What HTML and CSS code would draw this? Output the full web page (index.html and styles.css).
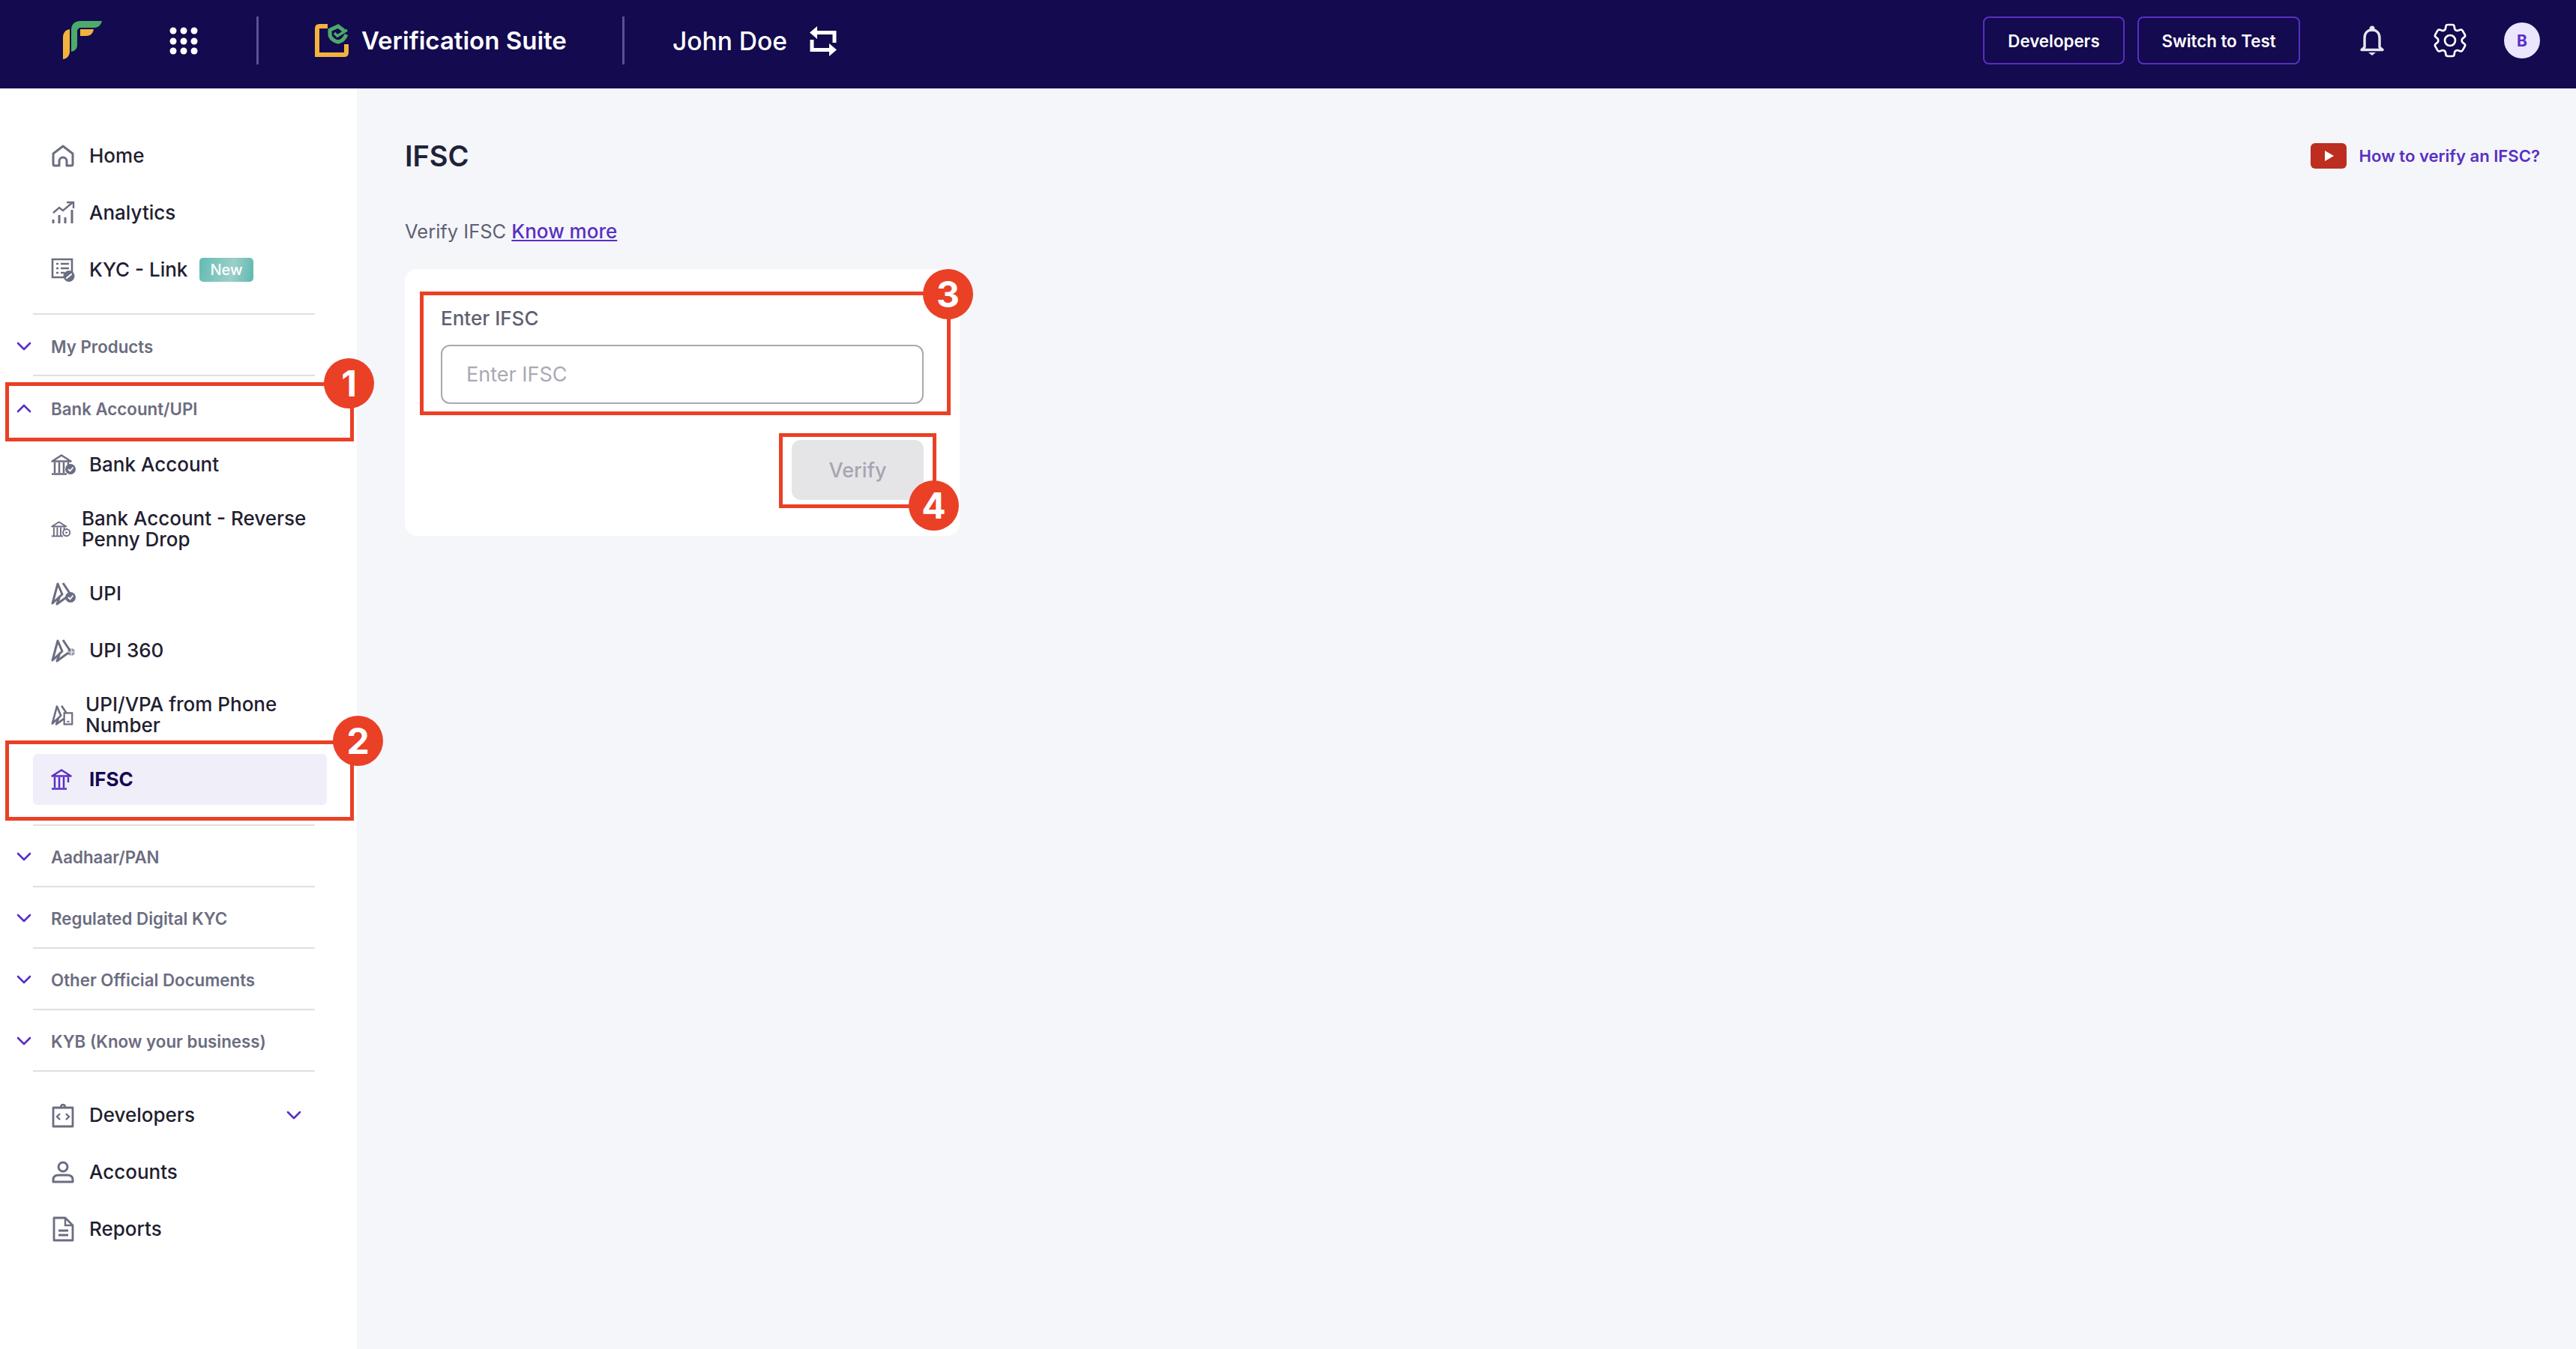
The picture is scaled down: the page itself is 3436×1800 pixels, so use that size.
FILE: index.html
```html
<!DOCTYPE html>
<html lang="en">
  <head>
    <meta charset="UTF-8">
    <title>IFSC - Verification Suite</title>
    <link rel="stylesheet" href="styles.css">
  </head>
  <body>
    <svg class="defs" width="0" height="0">
      <symbol id="bank" viewBox="0 0 34 28">
        <path d="M1.5 9.5 L14 1.5 L26.5 9.5 Z" fill="none" stroke="currentColor" stroke-width="2.5" stroke-linejoin="round"/>
        <path d="M5 11 V25 M11 11 V25 M17 11 V25 M23 11 V18 M1 26.5 H21" fill="none" stroke="currentColor" stroke-width="2.5"/>
      </symbol>
      <symbol id="upi" viewBox="0 0 34 32">
        <path d="M9 3 L2 29 L15 17 Z M16 2 L26 17 L8 30 L12 19" fill="none" stroke="currentColor" stroke-width="3" stroke-linejoin="round"/>
      </symbol>
      <symbol id="chev" viewBox="0 0 20 12">
        <path d="M2 2 L10 10 L18 2" fill="none" stroke="currentColor" stroke-width="2.6" stroke-linecap="round" stroke-linejoin="round"/>
      </symbol>
    </svg>

    <div class="app">
      <header class="topbar">
        <svg class="logo" viewBox="0 0 52 51">
          <path d="M9 11 C3 12 0 16 0 22 V51 C6 50 9 46 9 40 Z" fill="#f2b33d"/>
          <path d="M52 0 H23 C15 0 11 5 11 12 V41 C16 40 19 37 19 32 V14 C19 11 21 9 24 9 H42 C47 9 51 5 52 0 Z" fill="#4caa6a"/>
          <path d="M23 11 H41 C40 17 36 20 31 20 H23 Z" fill="#f2b33d"/>
        </svg>
        <svg class="apps" viewBox="0 0 38 38">
          <circle cx="5" cy="5" r="4.5"/><circle cx="19" cy="5" r="4.5"/><circle cx="33" cy="5" r="4.5"/>
          <circle cx="5" cy="19" r="4.5"/><circle cx="19" cy="19" r="4.5"/><circle cx="33" cy="19" r="4.5"/>
          <circle cx="5" cy="32" r="4.5"/><circle cx="19" cy="32" r="4.5"/><circle cx="33" cy="32" r="4.5"/>
        </svg>
        <span class="bar-line bar-line-a"></span>
        <svg class="suite-icon" viewBox="0 0 46 45">
          <path d="M17 3 H6 Q3 3 3 6 V41 H39 Q42 41 42 38 V27" fill="none" stroke="#f2b33d" stroke-width="6"/>
          <path d="M39 9 L31 3 L20 8 V14 C20 19 26 23 31 24 C36 23 40 19 42 14" fill="none" stroke="#4caa6a" stroke-width="5"/>
          <path d="M26 12 L30 16 L43 8" fill="none" stroke="#4caa6a" stroke-width="3.5"/>
        </svg>
        <span class="suite-name">Verification Suite</span>
        <span class="bar-line bar-line-b"></span>
        <span class="org-name">John Doe</span>
        <svg class="swap" viewBox="0 0 36 40">
          <path d="M9 8.5 H33 V22 M3 18 V31.5 H27" fill="none" stroke="#fff" stroke-width="5"/>
          <path d="M0 8.5 L10 0 V17 Z M36 31.5 L26 23 V40 Z" fill="#fff"/>
        </svg>
        <div class="topbar-right">
          <a class="ghost-btn">Developers</a>
          <a class="ghost-btn">Switch to Test</a>
          <svg class="bell" viewBox="0 0 32 40">
            <path d="M6 29 V17 C6 10 10 6 16 6 C22 6 26 10 26 17 V29 L30 32.5 H2 Z" fill="none" stroke="#e6e6ee" stroke-width="3.4" stroke-linejoin="round"/>
            <circle cx="16" cy="4" r="3.5" fill="#e6e6ee"/>
            <path d="M11 36 H21 L16 40 Z" fill="#e6e6ee"/>
          </svg>
          <svg class="gear" viewBox="0 0 24 24" fill="none" stroke="#fff" stroke-width="1.15">
            <path d="M9.594 3.94c.09-.542.56-.94 1.11-.94h2.593c.55 0 1.02.398 1.11.94l.213 1.281c.063.374.313.686.645.87.074.04.147.083.22.127.325.196.72.257 1.075.124l1.217-.456a1.125 1.125 0 011.37.49l1.296 2.247a1.125 1.125 0 01-.26 1.431l-1.003.827c-.293.24-.438.613-.431.992a6.759 6.759 0 010 .255c-.007.378.138.75.43.99l1.005.828c.424.35.534.954.26 1.43l-1.298 2.247a1.125 1.125 0 01-1.369.491l-1.217-.456c-.355-.133-.75-.072-1.076.124a6.57 6.57 0 01-.22.128c-.331.183-.581.495-.644.869l-.213 1.28c-.09.543-.56.941-1.11.941h-2.594c-.55 0-1.02-.398-1.11-.94l-.213-1.281c-.062-.374-.312-.686-.644-.87a6.52 6.52 0 01-.22-.127c-.325-.196-.72-.257-1.076-.124l-1.217.456a1.125 1.125 0 01-1.369-.49l-1.297-2.247a1.125 1.125 0 01.26-1.431l1.004-.827c.292-.24.437-.613.43-.992a6.932 6.932 0 010-.255c.007-.378-.138-.75-.43-.99l-1.004-.828a1.125 1.125 0 01-.26-1.43l1.297-2.247a1.125 1.125 0 011.37-.491l1.216.456c.356.133.751.072 1.076-.124.072-.044.146-.087.22-.128.332-.183.582-.495.644-.869l.214-1.281z"/>
            <circle cx="12" cy="12" r="3"/>
          </svg>
          <span class="avatar">B</span>
        </div>
      </header>

      <div class="body-row">
        <nav class="sidebar">
          <a class="nav-item">
            <svg class="nav-icon" viewBox="0 0 34 34"><path d="M3 14 L16 4 L29 14 V28 Q29 30 27 30 H21 V24 A5 5 0 0 0 11 24 V30 H5 Q3 30 3 28 Z" fill="none" stroke="currentColor" stroke-width="3" stroke-linejoin="round"/></svg>
            <span>Home</span>
          </a>
          <a class="nav-item">
            <svg class="nav-icon" viewBox="0 0 34 34"><path d="M3 26 V31 M11 20 V31 M19 23 V31 M28 13 V31" fill="none" stroke="currentColor" stroke-width="3"/><path d="M3 17 L11 10 L16 14 L29 3 M21 3 H30 V11" fill="none" stroke="currentColor" stroke-width="2.4"/></svg>
            <span>Analytics</span>
          </a>
          <a class="nav-item">
            <svg class="nav-icon" viewBox="0 0 34 34"><path d="M2 3 H28 V27 H2 Z" fill="none" stroke="currentColor" stroke-width="2.6"/><path d="M7 9 H10 M13 9 H24 M7 15 H10 M13 15 H24 M7 21 H10 M13 21 H18" fill="none" stroke="currentColor" stroke-width="2.4"/><circle cx="24" cy="25.500" r="7.500" fill="currentColor"/><path d="M21 28 L27 23" stroke="#fff" stroke-width="2.200" stroke-linecap="round"/></svg>
            <span>KYC - Link</span>
            <em class="new-tag">New</em>
          </a>

          <div class="section section-first section-products">
            <svg class="section-chev"><use href="#chev"/></svg>
            <span>My Products</span>
          </div>
          <div class="section section-open">
            <svg class="section-chev chev-up"><use href="#chev"/></svg>
            <span>Bank Account/UPI</span>
          </div>

          <a class="nav-item">
            <svg class="nav-icon" viewBox="0 0 34 28"><use href="#bank" width="34" height="28"/><circle cx="26" cy="20" r="7" fill="currentColor"/><path d="M23 20 L25.500 22.500 L29.500 17.500" fill="none" stroke="#fff" stroke-width="1.800"/></svg>
            <span>Bank Account</span>
          </a>
          <a class="nav-item nav-tall">
            <svg class="nav-icon icon-small" viewBox="0 0 34 28"><use href="#bank" width="34" height="28"/><circle cx="27" cy="20" r="6" fill="#fff" stroke="currentColor" stroke-width="2.500"/><path d="M25.500 17.500 L29.500 20 L25.500 22.500 Z" fill="currentColor"/></svg>
            <span class="wrap-label">Bank Account - Reverse<br>Penny Drop</span>
          </a>
          <a class="nav-item">
            <svg class="nav-icon" viewBox="0 0 34 32"><use href="#upi" width="34" height="32"/><circle cx="26" cy="21" r="7" fill="currentColor"/><path d="M23 21 L25.500 23.500 L29.500 18.500" fill="none" stroke="#fff" stroke-width="1.800"/></svg>
            <span>UPI</span>
          </a>
          <a class="nav-item">
            <svg class="nav-icon" viewBox="0 0 34 32"><use href="#upi" width="34" height="32"/><circle cx="27" cy="18" r="5" fill="currentColor" opacity=".7"/><path d="M22 18 H32 M27 13 V23" stroke="#fff" stroke-width="1"/></svg>
            <span>UPI 360</span>
          </a>
          <a class="nav-item nav-tall">
            <svg class="nav-icon icon-mid" viewBox="0 0 34 32"><use href="#upi" width="34" height="32"/><path d="M20 13 H32 V30 H20 Z" fill="#fff" stroke="currentColor" stroke-width="2.500"/><path d="M24 26 H28" stroke="currentColor" stroke-width="2"/></svg>
            <span class="wrap-label">UPI/VPA from Phone<br>Number</span>
          </a>
          <a class="nav-item nav-active">
            <svg class="nav-icon icon-active" viewBox="0 0 34 28"><use href="#bank" width="34" height="28"/></svg>
            <span>IFSC</span>
          </a>

          <div class="section section-first section-gap">
            <svg class="section-chev"><use href="#chev"/></svg>
            <span>Aadhaar/PAN</span>
          </div>
          <div class="section">
            <svg class="section-chev"><use href="#chev"/></svg>
            <span>Regulated Digital KYC</span>
          </div>
          <div class="section">
            <svg class="section-chev"><use href="#chev"/></svg>
            <span>Other Official Documents</span>
          </div>
          <div class="section">
            <svg class="section-chev"><use href="#chev"/></svg>
            <span>KYB (Know your business)</span>
          </div>

          <a class="nav-item nav-after">
            <svg class="nav-icon" viewBox="0 0 34 34"><path d="M3 7 H29 V32 H3 Z" fill="none" stroke="currentColor" stroke-width="2.800" stroke-linejoin="round"/><path d="M13 7 Q13 3 16 3 Q19 3 19 7" fill="none" stroke="currentColor" stroke-width="2.400"/><path d="M12 15 L8 19 L12 23 M20 15 L24 19 L20 23" fill="none" stroke="currentColor" stroke-width="2.400"/></svg>
            <span>Developers</span>
            <svg class="item-chev"><use href="#chev"/></svg>
          </a>
          <a class="nav-item">
            <svg class="nav-icon" viewBox="0 0 34 34"><circle cx="16" cy="10" r="6" fill="none" stroke="currentColor" stroke-width="3"/><path d="M3 30 V27 Q3 21 10 21 H22 Q29 21 29 27 V30 Z" fill="none" stroke="currentColor" stroke-width="3" stroke-linejoin="round"/></svg>
            <span>Accounts</span>
          </a>
          <a class="nav-item">
            <svg class="nav-icon" viewBox="0 0 34 34"><path d="M4 2 H19 L29 12 V32 H4 Z" fill="none" stroke="currentColor" stroke-width="2.800" stroke-linejoin="round"/><path d="M19 2 V12 H29" fill="none" stroke="currentColor" stroke-width="2.400"/><path d="M10 19 H23 M10 25 H23" stroke="currentColor" stroke-width="2.800"/></svg>
            <span>Reports</span>
          </a>
        </nav>

        <main class="content">
          <div class="title-row">
            <h1>IFSC</h1>
            <a class="how-to">
              <svg class="yt" viewBox="0 0 48 34"><rect width="48" height="34" rx="6" fill="#bd2d20"/><path d="M19 10 L31 17 L19 24 Z" fill="#fff"/></svg>
              How to verify an IFSC?
            </a>
          </div>
          <p class="lead">Verify IFSC <a href="#">Know more</a></p>
          <section class="card">
            <label class="field-label" for="ifsc">Enter IFSC</label>
            <input class="field" id="ifsc" placeholder="Enter IFSC">
            <div class="actions"><button class="verify" disabled>Verify</button></div>
          </section>
        </main>
      </div>

      <!-- tutorial callouts drawn over the page -->
      <div class="callout callout-1"></div>
      <div class="callout callout-2"></div>
      <div class="callout callout-3"></div>
      <div class="callout callout-4"></div>
      <div class="step step-1">1</div>
      <div class="step step-2">2</div>
      <div class="step step-3">3</div>
      <div class="step step-4">4</div>
    </div>
  </body>
</html>
```

FILE: styles.css
```css
* { box-sizing: border-box; }

body {
  margin: 0;
  background-color: #f4f6fa;
  font-family: Inter, "Noto Sans", sans-serif;
  color: #1f2030;
}
.defs { position: absolute; }

.app {
  position: relative;
  width: 3436px;
  height: 1800px;
  overflow: hidden;
}

/* top bar */
.topbar {
  display: flex;
  align-items: center;
  height: 118px;
  padding: 0 48px 0 84px;
  background-color: #130a4f;
  color: #ffffff;
}
.logo { width: 52px; height: 51px; margin-top: -11px; }
.apps { width: 38px; height: 38px; margin-left: 90px; margin-top: -8px; fill: #ffffff; }
.bar-line {
  width: 3px;
  height: 64px;
  background-color: #5a5296;
  margin-top: -10px;
}
.bar-line-a { margin-left: 78px; }
.suite-icon { width: 46px; height: 45px; margin-left: 75px; margin-top: -10px; }
.suite-name { margin-left: 16px; margin-top: -10px; font-size: 33px; font-weight: 600; white-space: nowrap; }
.bar-line-b { margin-left: 74px; }
.org-name { margin-left: 64px; margin-top: -10px; font-size: 33.6px; font-weight: 500; white-space: nowrap; }
.swap { width: 36px; height: 40px; margin-left: 30px; margin-top: -9px; }
.topbar-right {
  display: flex;
  align-items: center;
  margin-left: auto;
  margin-top: -10px;
}
.ghost-btn {
  display: flex;
  align-items: center;
  justify-content: center;
  height: 64px;
  margin-right: 17px;
  border: 2px solid #5a2fc2;
  border-radius: 8px;
  font-size: 22.3px;
  font-weight: 600;
}
.ghost-btn:nth-child(1) { width: 189px; }
.ghost-btn:nth-child(2) { width: 217px; margin-right: 0; }
.bell { width: 32px; height: 40px; margin-left: 80px; }
.gear { width: 56px; height: 56px; margin-left: 60px; }
.avatar {
  display: flex;
  align-items: center;
  justify-content: center;
  width: 48px;
  height: 48px;
  margin-left: 44px;
  border-radius: 50%;
  background-color: #ebe5fd;
  color: #5a2fc2;
  font-size: 21px;
  font-weight: 700;
}

.body-row {
  display: flex;
  height: 1682px;
}

/* sidebar */
.sidebar {
  width: 476px;
  flex-shrink: 0;
  padding: 56px 40px 0 44px;
  background-color: #ffffff;
}
.nav-item {
  display: flex;
  align-items: center;
  min-height: 68px;
  margin-bottom: 8px;
  padding: 0 24px;
  border-radius: 6px;
  font-size: 26px;
  font-weight: 500;
  line-height: 28px;
  color: #1f2030;
}
.nav-icon {
  flex-shrink: 0;
  width: 34px;
  height: 34px;
  margin-right: 17px;
  color: #6b6d80;
}
.icon-small { width: 26px; height: 22px; margin-right: 15px; }
.icon-mid { width: 30px; height: 30px; margin-right: 16px; }
.icon-active { width: 34px; height: 28px; color: #5a2fc2; }
.nav-tall { min-height: 88px; }
.wrap-label { white-space: nowrap; }
.nav-active {
  background-color: #f0eef9;
  color: #130a4f;
  font-weight: 700;
}
.nav-after { margin-top: 24px; }
.new-tag {
  margin-left: 16px;
  padding: 0 14px;
  height: 32px;
  border-radius: 5px;
  background: linear-gradient(100deg, #62bcb4, #9ccfc8 60%, #5db8b0);
  color: #ffffff;
  font-size: 20px;
  font-style: normal;
  line-height: 32px;
}
.item-chev {
  width: 20px;
  height: 12px;
  margin-left: auto;
  margin-right: 10px;
  color: #5a2fc2;
}

.section {
  display: flex;
  align-items: center;
  height: 82px;
  margin: 0 16px 0 0;
  padding-top: 2px;
  border-bottom: 2px solid #dfdfe3;
  font-size: 22.3px;
  font-weight: 600;
  color: #6b6d80;
}
.section span { margin-left: 26px; white-space: nowrap; }
.section-first { border-top: 2px solid #dfdfe3; height: 84px; margin-top: 24px; }
.section-products { padding-top: 4px; }
.section-gap { margin-top: 26px; }
.section-open { border-bottom: 0; height: 84px; }
.section-chev {
  flex-shrink: 0;
  width: 20px;
  height: 12px;
  margin-left: -22px;
  color: #5a2fc2;
}
.chev-up { transform: rotate(180deg); }

/* main area */
.content {
  flex: 1;
  padding: 66px 48px 0 64px;
}
.title-row {
  display: flex;
  align-items: center;
  justify-content: space-between;
  height: 48px;
}
h1 {
  margin: 0;
  font-size: 38px;
  font-weight: 600;
  color: #20223a;
}
.how-to {
  display: flex;
  align-items: center;
  font-size: 22.1px;
  font-weight: 600;
  color: #5a2fc2;
}
.yt { width: 48px; height: 34px; margin-right: 17px; }
.lead {
  margin: 60px 0 33px;
  font-size: 25.5px;
  line-height: 34px;
  color: #5f6072;
}
.lead a { color: #5a2fc2; font-size: 26px; font-weight: 500; }
.card {
  width: 740px;
  height: 356px;
  padding: 50px 48px 0;
  border-radius: 16px;
  background-color: #ffffff;
}
.field-label {
  display: block;
  font-size: 26px;
  font-weight: 500;
  line-height: 32px;
  color: #5f6072;
}
.field {
  display: block;
  width: 100%;
  height: 79px;
  margin-top: 19px;
  padding: 0 32px;
  border: 2px solid #a9a8b3;
  border-radius: 12px;
  background-color: #ffffff;
  font-family: inherit;
  font-size: 27px;
}
.field::placeholder { color: #a9a9b5; }
.actions {
  display: flex;
  justify-content: flex-end;
  margin-top: 48px;
}
.verify {
  width: 176px;
  height: 80px;
  border: 0;
  border-radius: 12px;
  background-color: #e5e5e8;
  color: #a6a6b0;
  font-family: inherit;
  font-size: 27px;
  font-weight: 500;
}

/* callouts */
.callout {
  position: absolute;
  border: 5px solid #ea4026;
}
.callout-1 { left: 7px; top: 510px; width: 465px; height: 79px; }
.callout-2 { left: 7px; top: 988px; width: 465px; height: 107px; }
.callout-3 { left: 560px; top: 389px; width: 708px; height: 165px; }
.callout-4 { left: 1039px; top: 578px; width: 210px; height: 100px; }
.step {
  position: absolute;
  display: flex;
  align-items: center;
  justify-content: center;
  width: 67px;
  height: 67px;
  border-radius: 50%;
  background-color: #ea4026;
  color: #ffffff;
  font-size: 48px;
  font-weight: 700;
}
.step-1 { left: 432px; top: 478px; }
.step-2 { left: 444px; top: 955px; }
.step-3 { left: 1231px; top: 359px; }
.step-4 { left: 1212px; top: 641px; }
```
